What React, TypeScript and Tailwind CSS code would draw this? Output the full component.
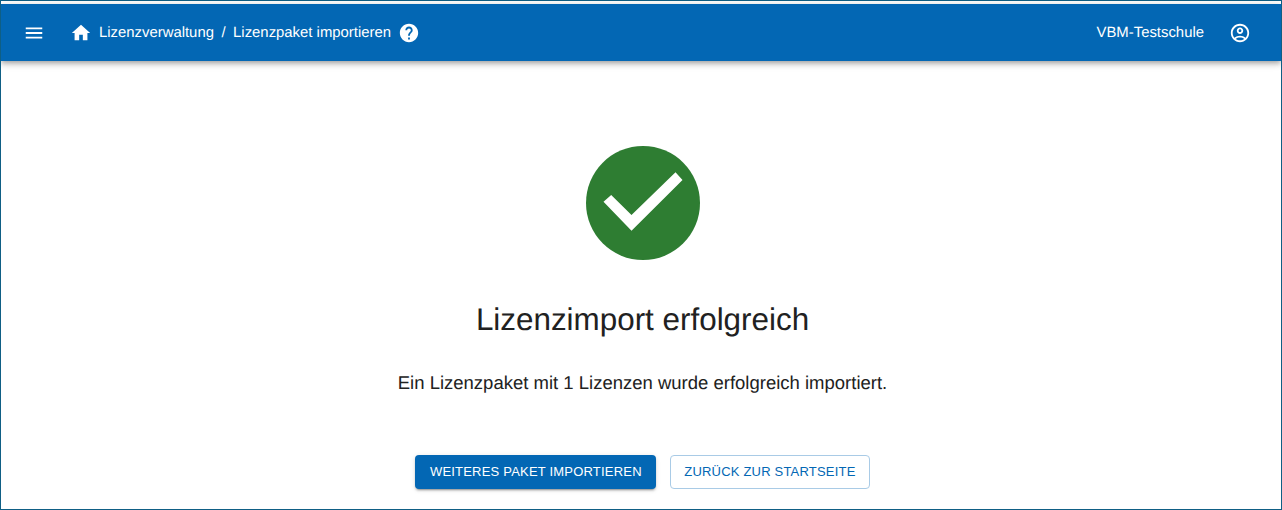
function MenuIcon() {
  return (
    <svg viewBox="0 0 24 24" className="h-[22px] w-[22px] fill-white">
      <path d="M3 18h18v-2H3v2zm0-5h18v-2H3v2zm0-7v2h18V6H3z" />
    </svg>
  );
}

function HomeIcon() {
  return (
    <svg viewBox="0 0 24 24" className="h-[22px] w-[22px] fill-white">
      <path d="M10 20v-6h4v6h5v-8h3L12 3 2 12h3v8z" />
    </svg>
  );
}

function HelpIcon() {
  return (
    <svg viewBox="0 0 24 24" className="h-[22px] w-[22px] fill-white">
      <path d="M12 2C6.48 2 2 6.48 2 12s4.48 10 10 10 10-4.48 10-10S17.52 2 12 2zm1 17h-2v-2h2v2zm2.07-7.75-.9.92C13.45 12.9 13 13.5 13 15h-2v-.5c0-1.1.45-2.1 1.17-2.83l1.24-1.26c.37-.36.59-.86.59-1.41 0-1.1-.9-2-2-2s-2 .9-2 2H8c0-2.21 1.79-4 4-4s4 1.79 4 4c0 .88-.36 1.68-.93 2.25z" />
    </svg>
  );
}

function AccountIcon() {
  return (
    <svg viewBox="0 0 24 24" className="h-[22px] w-[22px] fill-white">
      <path d="M12 2C6.48 2 2 6.48 2 12s4.48 10 10 10 10-4.48 10-10S17.52 2 12 2zM7.35 18.5C8.66 17.56 10.26 17 12 17s3.34.56 4.65 1.5c-1.31.94-2.91 1.5-4.65 1.5s-3.34-.56-4.65-1.5zm10.79-1.38C16.45 15.8 14.32 15 12 15s-4.45.8-6.14 2.12C4.7 15.73 4 13.95 4 12c0-4.42 3.58-8 8-8s8 3.58 8 8c0 1.95-.7 3.73-1.86 5.12zM12 6c-1.93 0-3.5 1.57-3.5 3.5S10.07 13 12 13s3.5-1.57 3.5-3.5S13.93 6 12 6zm0 5c-.83 0-1.5-.67-1.5-1.5S11.17 8 12 8s1.5.67 1.5 1.5S12.83 11 12 11z" />
    </svg>
  );
}

export default function App() {
  return (
    <div className="flex h-[510px] w-[1282px] flex-col overflow-hidden border border-t-0 border-[#0f5f85] bg-white font-['Liberation_Sans',Arial,sans-serif] text-[#212121] [text-rendering:geometricPrecision]">
      <div className="h-[1px] bg-[#0f5f85]" />
      <div className="h-[3px] bg-white" />
      <header className="relative flex h-[57px] items-center justify-between bg-[#0367b4] pl-[22px] pr-[30px] text-white shadow-[0_2px_4px_-1px_rgba(0,0,0,0.2),0_4px_5px_0_rgba(0,0,0,0.14),0_1px_10px_0_rgba(0,0,0,0.12)]">
        <div className="flex items-center">
          <MenuIcon />
          <div className="ml-[25px] flex items-center text-[14.88px]">
            <HomeIcon />
            <span className="ml-[7px] pt-[1px]">Lizenzverwaltung</span>
            <span className="mx-[7.5px] pt-[1px]">/</span>
            <span className="pt-[1px]">Lizenzpaket importieren</span>
            <span className="ml-[7px]">
              <HelpIcon />
            </span>
          </div>
        </div>
        <div className="flex items-center">
          <span className="pt-[1px] text-[14.88px]">VBM-Testschule</span>
          <span className="ml-[25px]">
            <AccountIcon />
          </span>
        </div>
      </header>

      <main className="flex flex-1 flex-col items-center pl-[3px] pt-[85px]">
        <svg viewBox="0 0 114 114" className="h-[114px] w-[114px]">
          <circle cx="57" cy="57" r="57" fill="#2e7d32" />
          <polygon points="17.5,55.7 25.2,49 45.5,69 89.5,26.3 96.5,34 45.5,84.7" fill="#fff" />
        </svg>
        <h1 className="mt-[38px] text-[31.4px] leading-[44px]">Lizenzimport erfolgreich</h1>
        <p className="mt-[27px] text-[18.5px] leading-[28px]">
          Ein Lizenzpaket mit 1 Lizenzen wurde erfolgreich importiert.
        </p>
        <div className="mt-[58px] flex items-center gap-[14px]">
          <button className="h-[34px] rounded-[4px] bg-[#0367b4] px-[14.5px] text-[13px] tracking-[0.2px] text-white shadow-[0_3px_1px_-2px_rgba(0,0,0,0.2),0_2px_2px_0_rgba(0,0,0,0.14),0_1px_5px_0_rgba(0,0,0,0.12)]">
            WEITERES PAKET IMPORTIEREN
          </button>
          <button className="h-[34px] rounded-[4px] border border-[#a9cbe6] bg-white px-[13px] text-[13px] tracking-[0.2px] text-[#0367b4]">
            ZURÜCK ZUR STARTSEITE
          </button>
        </div>
      </main>
    </div>
  );
}
